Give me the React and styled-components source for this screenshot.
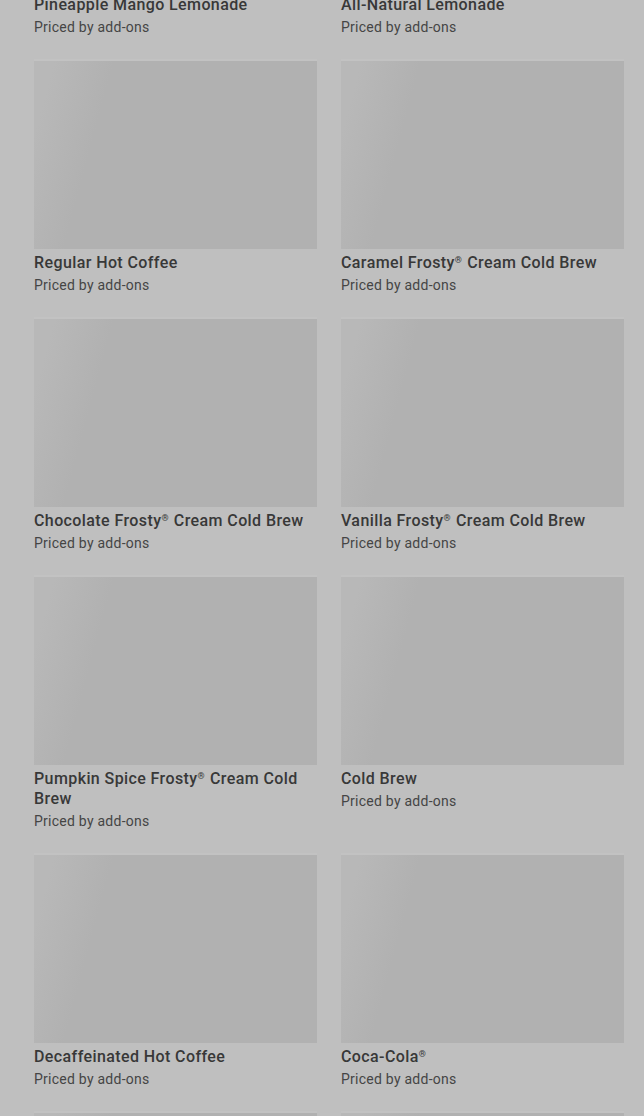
import styled, { createGlobalStyle } from 'styled-components'

const Global = createGlobalStyle`
  html, body {
    margin: 0;
    padding: 0;
    background: #bfbfbf;
    overflow: hidden;
  }
  body {
    font-family: Roboto, "Liberation Sans", sans-serif;
  }
`

const items = [
  'Pineapple Mango Lemonade',
  'All-Natural Lemonade',
  'Regular Hot Coffee',
  'Caramel Frosty® Cream Cold Brew',
  'Chocolate Frosty® Cream Cold Brew',
  'Vanilla Frosty® Cream Cold Brew',
  'Pumpkin Spice Frosty® Cream Cold Brew',
  'Cold Brew',
  'Decaffeinated Hot Coffee',
  'Coca-Cola®',
  'Sprite®',
  'Dr Pepper®',
]

// the ® sign sits small and raised in the reference
const withMark = (name) =>
  name.split('®').map((part, i, arr) => (
    <span key={i}>
      {part}
      {i < arr.length - 1 && <Mark>®</Mark>}
    </span>
  ))

const App = () => {
  return (
    <Page>
      <Global />
      <Grid>
        {items.map((name) => (
          <Card key={name}>
            <Thumb />
            <Title>{withMark(name)}</Title>
            <Price>Priced by add-ons</Price>
          </Card>
        ))}
      </Grid>
    </Page>
  )
}

export default App

const Page = styled.div`
  height: 1116px;
  overflow: hidden;
  padding: 0 20px 0 34px;
`

const Grid = styled.div`
  display: grid;
  grid-template-columns: 283px 283px;
  column-gap: 24px;
  row-gap: 24px;
  margin-top: -197px;
`

const Card = styled.div`
  display: flex;
  flex-direction: column;
`

const Thumb = styled.div`
  height: 188px;
  background: linear-gradient(105deg, #b8b8b8 0%, #b8b8b8 6%, #b1b1b1 24%, #b1b1b1 100%);
  box-shadow: 0 -2px 0 #c2c2c2;
`

const Title = styled.div`
  margin-top: 4px;
  font-size: 16px;
  line-height: 20px;
  font-weight: 500;
  letter-spacing: 0.4px;
  color: #383838;
`

const Mark = styled.span`
  font-size: 9px;
  vertical-align: 5px;
  line-height: 0;
  letter-spacing: 0;
  margin-right: 1px;
`

const Price = styled.div`
  margin-top: 2px;
  font-size: 14px;
  line-height: 20px;
  letter-spacing: 0.25px;
  color: #454545;
`
